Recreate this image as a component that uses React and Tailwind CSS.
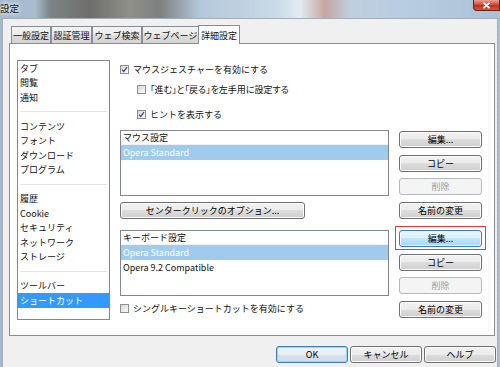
import React from "react";

const BTN =
  "flex items-center justify-center h-[17px] rounded-[3px] border text-[9px] leading-none";
const BTN_NORMAL =
  "border-[#707070] text-black bg-[linear-gradient(#f2f2f2_0%,#ebebeb_50%,#dddddd_50%,#cfcfcf_100%)] shadow-[inset_0_0_0_1px_#fcfcfc]";
const BTN_DISABLED = "border-[#b5b9bc] text-[#a0a0a0] bg-[#f4f4f4]";
const BTN_HOT =
  "border-[#3c7fb1] text-black bg-[linear-gradient(#eaf6fd_0%,#d9f0fc_50%,#bee6fd_50%,#a7d9f5_100%)] shadow-[inset_0_0_0_1px_#f4fbfe]";
const BTN_DEFAULT =
  "border-[#3c7fb1] text-black bg-[linear-gradient(#eef4f8_0%,#e6eef4_50%,#d7e3ec_50%,#cbdbe6_100%)] shadow-[inset_0_0_0_1px_#8fd8f6]";

function Btn({ children, disabled, hot, def, className = "" }) {
  const look = disabled ? BTN_DISABLED : hot ? BTN_HOT : def ? BTN_DEFAULT : BTN_NORMAL;
  return <div className={`${BTN} ${look} ${className}`}>{children}</div>;
}

function Check({ checked }) {
  return (
    <span className="w-[9px] h-[9px] shrink-0 border border-[#8e8f8f] bg-[linear-gradient(135deg,#d6d6d6,#fdfdfd)] flex items-center justify-center">
      {checked && (
        <svg width="7" height="7" viewBox="0 0 7 7">
          <path d="M1 3.6 L2.8 5.4 L6 1.2" stroke="#3b4f86" strokeWidth="1.3" fill="none" />
        </svg>
      )}
    </span>
  );
}

function CheckRow({ checked, label, className = "", labelClass = "" }) {
  return (
    <div className={`h-[18px] flex items-center gap-[4px] ${className}`}>
      <Check checked={checked} />
      <span className={`leading-none ${labelClass}`}>{label}</span>
    </div>
  );
}

function ListBox({ title, items }) {
  return (
    <div className="h-[66px] border border-[#828790] bg-white flex flex-col">
      <div className="h-[14px] flex items-center pl-[2px] border-b border-[#eef0f2]">{title}</div>
      {items.map((it, i) => (
        <div
          key={it}
          className={`h-[15px] flex items-center pl-[2px] ${i === 0 ? "bg-[#9fcbee] text-white" : ""}`}
        >
          {it}
        </div>
      ))}
    </div>
  );
}

const sideItems = [
  "タブ", "閲覧", "通知", "-",
  "コンテンツ", "フォント", "ダウンロード", "プログラム", "-",
  "履歴", "Cookie", "セキュリティ", "ネットワーク", "ストレージ", "-",
  "ツールバー", "ショートカット",
];

const tabs = [
  ["一般設定", "w-[40px]"],
  ["認証管理", "w-[41px]"],
  ["ウェブ検索", "w-[50px]"],
  ["ウェブページ", "w-[57px]"],
];

export default function App() {
  return (
    <div className="w-[500px] h-[367px] overflow-hidden flex flex-col text-[9px] text-[#111] font-['Noto_Sans_CJK_JP','Noto_Sans',sans-serif] bg-[linear-gradient(90deg,#a3b9cc_0%,#a9bdce_7%,#7c8486_10%,#6e6f6c_18%,#8f9088_26%,#7d7f80_32%,#b3c8da_40%,#c9d9e7_55%,#e2ebf2_60%,#c6a6a0_65%,#bfd0df_70%,#b6cbdf_85%,#aac0d6_100%)]">
      {/* Title bar */}
      <div className="h-[18px] shrink-0 flex items-start justify-between">
        <span className="pt-[2px] text-[9.5px] leading-[12px] [text-shadow:0_0_4px_#fff,0_0_6px_#fff]">設定</span>
        <div className="w-[27px] h-[11px] rounded-bl-[4px] border border-t-0 border-[#6b1e14] bg-[linear-gradient(#e8a093_0%,#d0503c_45%,#c0301c_55%,#d25a3c_100%)] flex items-center justify-center">
          <svg width="9" height="7" viewBox="0 0 9 7">
            <path d="M1.5 0.8 L7.5 6.2 M7.5 0.8 L1.5 6.2" stroke="#fff" strokeWidth="1.8" />
          </svg>
        </div>
      </div>

      {/* Dialog body */}
      <div className="flex-1 mx-[2px] bg-[#f0f0f0] border border-b-0 border-[#a3aeb9] flex flex-col">
        {/* Tabs */}
        <div className="h-[24px] flex items-end pl-[8px] shrink-0">
          {tabs.map(([label, w]) => (
            <div
              key={label}
              className={`${w} h-[17px] flex items-center justify-center border border-b-0 border-[#898c95] bg-[linear-gradient(#f3f3f3_0%,#ebebeb_50%,#dddddd_50%,#d4d4d4_100%)] leading-none`}
            >
              {label}
            </div>
          ))}
          <div className="w-[42px] h-[19px] -ml-px relative z-10 -mb-px flex items-center justify-center border border-b-0 border-[#898c95] bg-white leading-none">
            詳細設定
          </div>
        </div>

        {/* Panel */}
        <div className="ml-[6px] w-[486px] h-[293px] border border-[#898c95] bg-white flex pt-[16px] pl-[7px]">
          {/* Category list */}
          <div className="w-[93px] h-[260px] border border-[#828790] bg-white flex flex-col">
            {sideItems.map((it, i) =>
              it === "-" ? (
                <div key={i} className="h-[14.5px] flex items-center px-[2px]">
                  <div className="h-px w-full bg-[#e3e3e3]" />
                </div>
              ) : (
                <div
                  key={i}
                  className={`h-[14.5px] flex items-center pl-[2px] leading-none ${
                    it === "ショートカット" ? "bg-[#3399ff] text-white" : ""
                  }`}
                >
                  {it}
                </div>
              )
            )}
          </div>

          {/* Right side */}
          <div className="ml-[10px] flex flex-col">
            <CheckRow checked label="マウスジェスチャーを有効にする" />
            <CheckRow
              className="mt-[2px] pl-[17px]"
              labelClass="[font-feature-settings:'palt']"
              label="「進む」と「戻る」を左手用に設定する"
            />
            <CheckRow checked className="mt-[7px] pl-[17px]" label="ヒントを表示する" />

            {/* Mouse group */}
            <div className="mt-[7px] flex">
              <div className="w-[269px] flex flex-col">
                <ListBox title="マウス設定" items={["Opera Standard"]} />
                <Btn className="mt-[6px] w-[185px]">センタークリックのオプション...</Btn>
              </div>
              <div className="ml-[10px] w-[83px] flex flex-col gap-[6.5px] pt-px">
                <Btn>編集...</Btn>
                <Btn>コピー</Btn>
                <Btn disabled>削除</Btn>
                <Btn>名前の変更</Btn>
              </div>
            </div>

            {/* Keyboard group */}
            <div className="mt-[11px] flex">
              <div className="w-[269px] flex flex-col">
                <ListBox title="キーボード設定" items={["Opera Standard", "Opera 9.2 Compatible"]} />
                <CheckRow className="mt-[3px]" label="シングルキーショートカットを有効にする" />
              </div>
              <div className="ml-[10px] w-[83px] flex flex-col gap-[6.5px]">
                <div className="relative">
                  <Btn hot>編集...</Btn>
                  <div className="absolute -left-[4px] -right-[4px] -top-[4px] -bottom-[3px] border border-[#d8403a]" />
                </div>
                <Btn>コピー</Btn>
                <Btn disabled>削除</Btn>
                <Btn>名前の変更</Btn>
              </div>
            </div>
          </div>
        </div>

        {/* Bottom buttons */}
        <div className="mt-[10px] flex justify-end gap-[2px] pr-[1px]">
          <Btn def className="w-[72px]">OK</Btn>
          <Btn className="w-[72px]">キャンセル</Btn>
          <Btn className="w-[72px]">ヘルプ</Btn>
        </div>
      </div>
    </div>
  );
}
